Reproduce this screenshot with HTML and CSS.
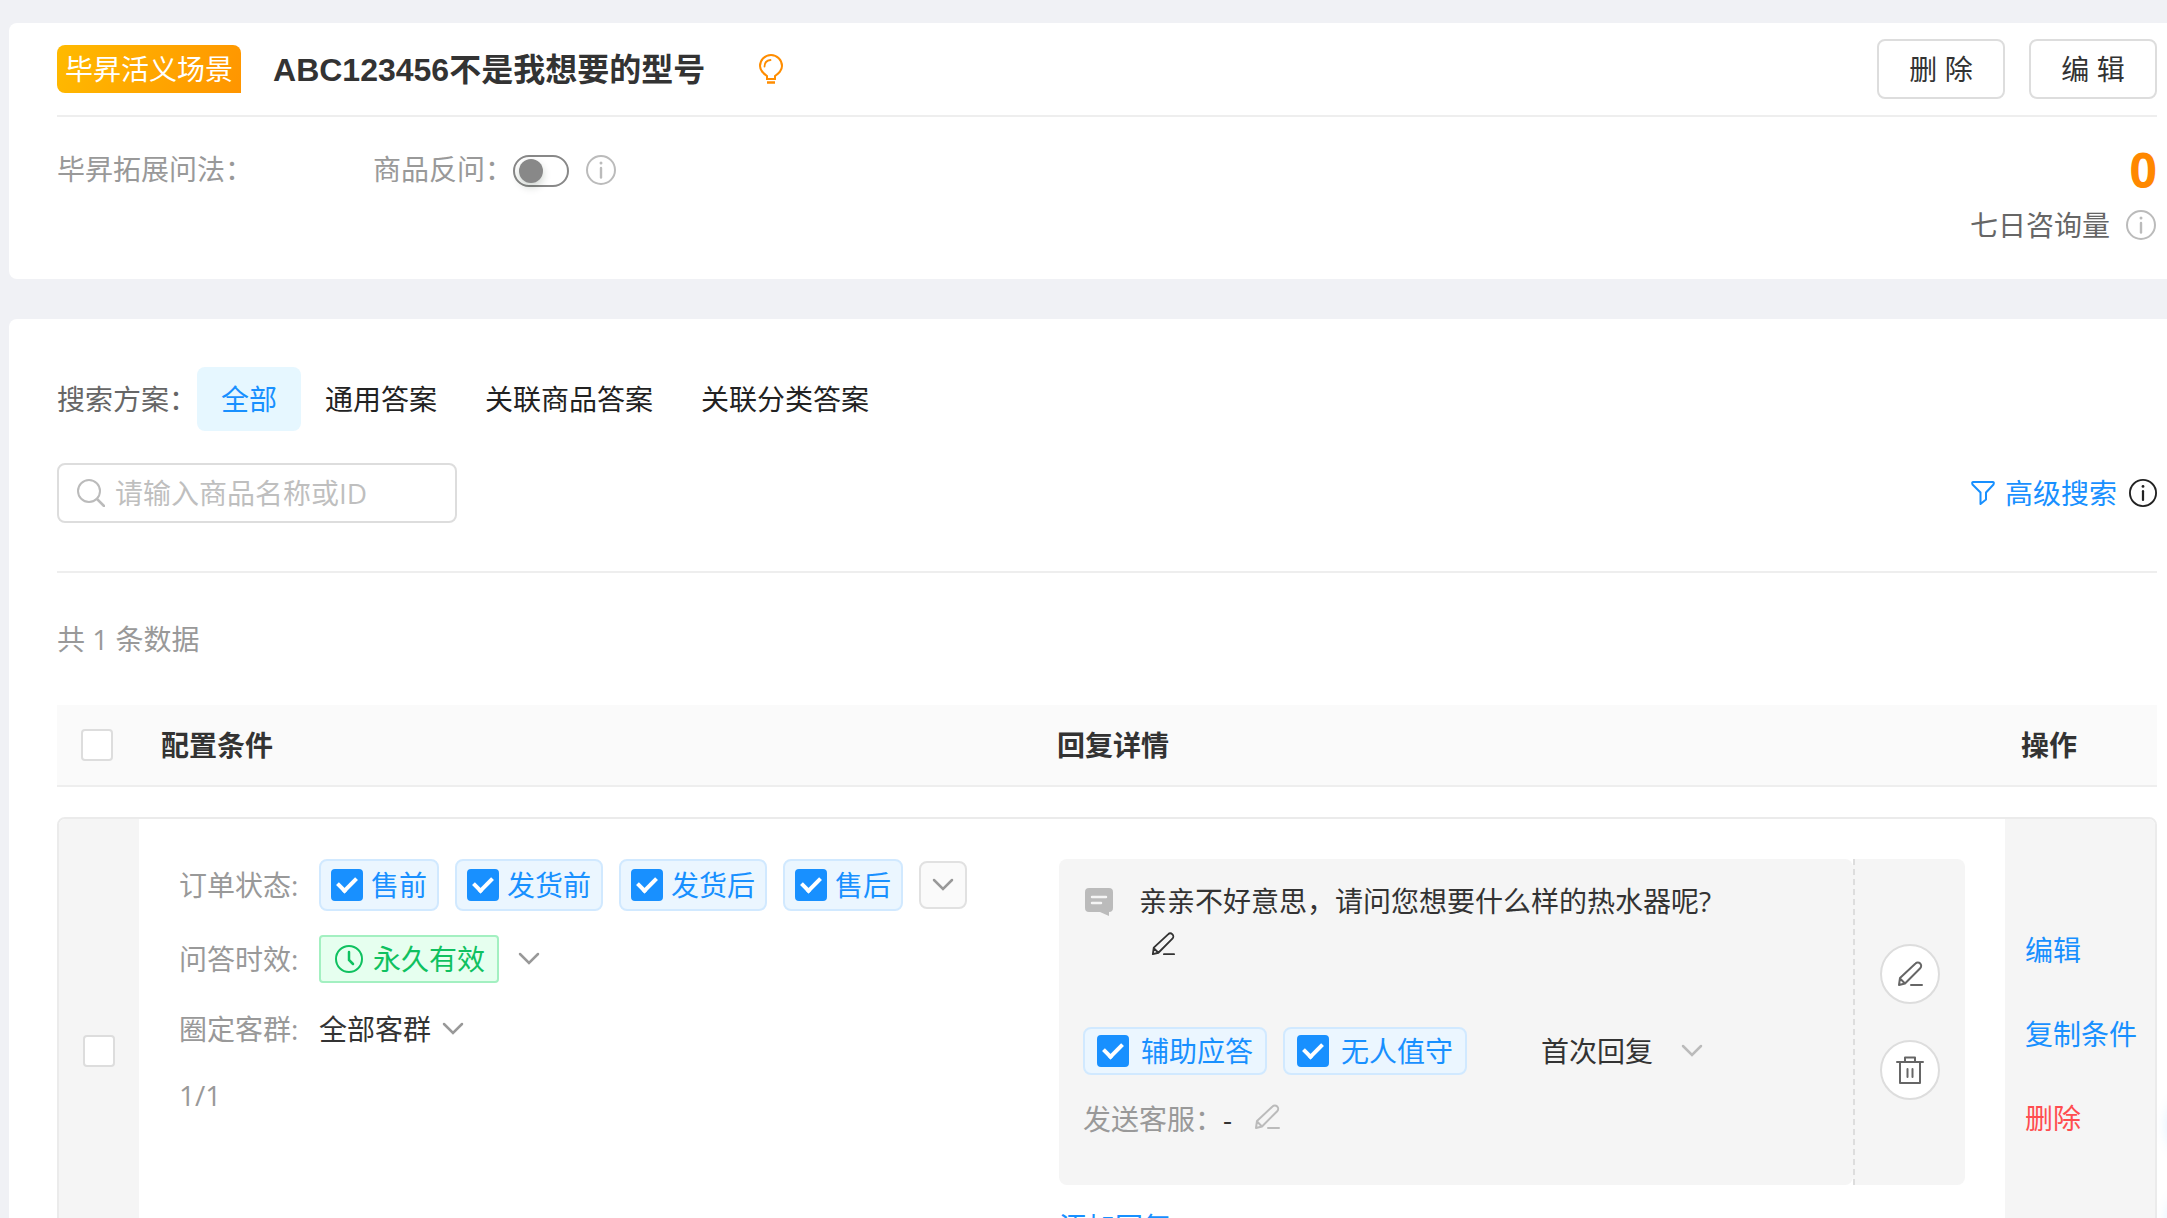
FILE: index.html
```html
<!DOCTYPE html>
<html lang="zh-CN">
<head>
<meta charset="utf-8">
<title>毕昇活义场景</title>
<link rel="stylesheet" href="styles.css">
</head>
<body>
<svg class="sprite" aria-hidden="true">
  <symbol id="i-info" viewBox="0 0 30 30"><circle cx="15" cy="15" r="14" fill="none" stroke="currentColor" stroke-width="2"/><circle cx="15" cy="8" r="1.500" fill="currentColor"/><path d="M15 13v9.500" fill="none" stroke="currentColor" stroke-width="2.400" stroke-linecap="round"/></symbol>
  <symbol id="i-down" viewBox="0 0 22 14"><path d="M2 2l9 9 9-9" fill="none" stroke="currentColor" stroke-width="2.500" stroke-linecap="round"/></symbol>
  <symbol id="i-pen" viewBox="0 0 26 26"><path d="M2 24l1-7L18.500 2.500a3.300 3.300 0 0 1 4.700 4.700L8 22.500zM3 17.500l5 5M14 24h11" fill="none" stroke="currentColor" stroke-width="2" stroke-linejoin="round" stroke-linecap="round"/></symbol>
</svg>
<main class="page">
  <section class="card">
    <header class="head">
      <span class="scene">毕昇活义场景</span>
      <h1 class="title">ABC123456不是我想要的型号</h1>
      <svg class="bulb" viewBox="0 0 24 30" aria-hidden="true"><path d="M8 25v-3C4.500 19.500 1 17 1 12a11 11 0 0 1 22 0C23 17 19.500 19.500 16 22v3z" fill="none" stroke="currentColor" stroke-width="2"/><path d="M5.500 12.500c0-4 2-6 6-6.500" fill="none" stroke="currentColor" stroke-width="1.800" stroke-linecap="round"/><path d="M8 28.500h8" stroke="currentColor" stroke-width="2.500"/></svg>
      <div class="head-actions">
        <button class="btn" type="button">删 除</button>
        <button class="btn" type="button">编 辑</button>
      </div>
    </header>
    <div class="meta">
      <span class="ask">毕昇拓展问法：</span>
      <label class="ask-back" for="ask-back">商品反问：</label>
      <input class="switch" id="ask-back" type="checkbox" role="switch">
      <svg class="info"><use href="#i-info"/></svg>
      <div class="stat">
        <strong class="count">0</strong>
        <span class="stat-label">七日咨询量 <svg class="info"><use href="#i-info"/></svg></span>
      </div>
    </div>
  </section>

  <section class="card list">
    <nav class="tabs">
      <span class="tabs-label">搜索方案：</span>
      <button class="tab active" type="button">全部</button>
      <button class="tab" type="button">通用答案</button>
      <button class="tab" type="button">关联商品答案</button>
      <button class="tab" type="button">关联分类答案</button>
    </nav>
    <div class="search-row">
      <label class="search">
        <svg class="search-icon" viewBox="0 0 28 28" aria-hidden="true"><circle cx="12" cy="12" r="11" fill="none" stroke="currentColor" stroke-width="2"/><path d="M20 20l7 7" stroke="currentColor" stroke-width="2.500" stroke-linecap="round"/></svg>
        <input class="search-input" type="text" placeholder="请输入商品名称或ID" aria-label="请输入商品名称或ID">
      </label>
      <a class="advanced" href="#"><svg class="filter" viewBox="0 0 24 26" aria-hidden="true"><path d="M2 2h20c1 0 1 1 .5 2.500L15 12.500v7L9.500 24V12.500L1.500 4.500C1 3 1 2 2 2z" fill="none" stroke="currentColor" stroke-width="2" stroke-linejoin="round"/></svg>高级搜索</a>
      <svg class="info dark"><use href="#i-info"/></svg>
    </div>
    <p class="total">共 1 条数据</p>

    <div class="grid grid-head">
      <div class="cell-check"><input class="check" type="checkbox" aria-label="全选"></div>
      <div class="th">配置条件</div>
      <div class="th">回复详情</div>
      <div class="th">操作</div>
    </div>
    <div class="grid grid-row">
      <div class="cell-check"><input class="check" type="checkbox" aria-label="选择"></div>
      <div class="conditions">
        <div class="line line-chips">
          <span class="label">订单状态:</span>
          <label class="chip"><input class="check" type="checkbox" checked>售前</label>
          <label class="chip"><input class="check" type="checkbox" checked>发货前</label>
          <label class="chip"><input class="check" type="checkbox" checked>发货后</label>
          <label class="chip"><input class="check" type="checkbox" checked>售后</label>
          <button class="more" type="button" aria-label="更多"><svg class="down"><use href="#i-down"/></svg></button>
        </div>
        <div class="line">
          <span class="label">问答时效:</span>
          <span class="valid"><svg class="clock" viewBox="0 0 28 28" aria-hidden="true"><circle cx="14" cy="14" r="13" fill="none" stroke="currentColor" stroke-width="2"/><path d="M14 7v8l4 4" fill="none" stroke="currentColor" stroke-width="2.500" stroke-linecap="round"/></svg>永久有效</span>
          <svg class="down"><use href="#i-down"/></svg>
        </div>
        <div class="line line-group">
          <span class="label">圈定客群:</span>
          <span>全部客群</span>
          <svg class="down"><use href="#i-down"/></svg>
        </div>
        <div class="pager">1/1</div>
      </div>
      <div class="replies">
        <div class="reply">
          <div class="reply-main">
            <div class="message">
              <svg class="chat" viewBox="0 0 28 28" aria-hidden="true"><path d="M4 0h20a4 4 0 0 1 4 4v16a4 4 0 0 1-4 4v4l-9-4H4a4 4 0 0 1-4-4V4a4 4 0 0 1 4-4z" fill="currentColor"/><path d="M7 9h14M7 15h9" stroke="#f5f5f5" stroke-width="2.500" stroke-linecap="round"/></svg>
              <div class="message-text">亲亲不好意思，请问您想要什么样的热水器呢?<br><svg class="pen"><use href="#i-pen"/></svg></div>
            </div>
            <div class="modes">
              <label class="chip mode"><input class="check" type="checkbox" checked>辅助应答</label>
              <label class="chip mode"><input class="check" type="checkbox" checked>无人值守</label>
              <span class="first">首次回复</span>
              <svg class="down light"><use href="#i-down"/></svg>
            </div>
            <div class="sender"><span class="muted">发送客服：</span>-<svg class="sender-pen"><use href="#i-pen"/></svg></div>
          </div>
          <div class="reply-side">
            <button class="round" type="button" aria-label="编辑"><svg class="round-pen"><use href="#i-pen"/></svg></button>
            <button class="round" type="button" aria-label="删除"><svg class="trash" viewBox="0 0 28 28"><path d="M1 6h26M9 5V1.500h10V5M4 6v21h20V6M11.500 13v8M16.500 13v8" fill="none" stroke="currentColor" stroke-width="2" stroke-linecap="round" stroke-linejoin="round"/></svg></button>
          </div>
        </div>
        <a class="add" href="#">添加回复</a>
      </div>
      <div class="ops">
        <a href="#">编辑</a>
        <a href="#">复制条件</a>
        <a class="danger" href="#">删除</a>
      </div>
    </div>
  </section>
</main>
<div class="dock" aria-hidden="true"><span class="dock-item"></span><span class="dock-item"></span></div>
</body>
</html>
```

FILE: styles.css
```css
* { box-sizing: border-box; }
html { scrollbar-width: none; }
body {
  margin: 0;
  background: #f0f1f5;
  color: #333;
  font: 28px/44px "Open Sans", "Noto Sans CJK SC", sans-serif;
}
button, input { font: inherit; color: inherit; }
button { cursor: pointer; }
svg { display: block; flex: none; }
a { color: #1890ff; text-decoration: none; }
.sprite { position: absolute; width: 0; height: 0; }

.page { display: flex; flex-direction: column; gap: 40px; padding: 23px 0 0 9px; }
.card { background: #fff; border-radius: 8px 0 0 8px; padding: 0 10px 0 48px; }

.head { display: flex; align-items: center; padding: 16px 0; border-bottom: 2px solid #eee; }
.scene {
  padding: 2px 8px;
  border-radius: 8px 8px 0 8px;
  background: linear-gradient(110deg, #ffba00, #ff9500);
  color: #fff;
}
.title {
  margin: 0 0 0 32px;
  padding-top: 2px;
  font: 700 32px/44px "Liberation Sans", "Noto Sans CJK SC", sans-serif;
}
.bulb { width: 24px; height: 30px; margin-left: 54px; color: #ff8d00; }
.head-actions { display: flex; gap: 24px; margin-left: auto; }
.btn {
  width: 128px;
  height: 60px;
  padding: 0;
  border: 2px solid #ddd;
  border-radius: 8px;
  background: #fff;
}
.meta { display: flex; align-items: flex-start; height: 162px; padding-top: 30px; color: #999; }
.ask { width: 316px; }
.switch {
  appearance: none;
  width: 56px;
  height: 32px;
  margin: 8px 17px 0 0;
  padding: 2px 4px;
  border: 2px solid #888;
  border-radius: 16px;
}
.switch::before {
  content: "";
  display: block;
  width: 24px;
  height: 24px;
  border-radius: 50%;
  background: #888;
  box-shadow: 0 4px 8px rgba(0, 35, 11, .2);
}
.info { width: 30px; height: 30px; color: #bbb; }
.meta > .info { margin-top: 8px; }
.stat { display: flex; flex-direction: column; align-items: flex-end; margin-left: auto; }
.count { font: 700 48px/46px "Open Sans", sans-serif; color: #ff8800; }
.stat-label { display: flex; align-items: center; gap: 16px; padding: 10px 1px 0 0; color: #666; }

.list { padding-top: 48px; min-height: 960px; }
.tabs { display: flex; align-items: center; }
.tabs-label { color: #666; }
.tab { height: 64px; padding: 0 24px; border: 0; border-radius: 8px; background: none; color: #222; }
.tab.active { background: #e6f7ff; color: #1890ff; }
.search-row { display: flex; align-items: center; padding: 32px 0 48px; border-bottom: 2px solid #eee; }
.search {
  display: flex;
  align-items: center;
  gap: 10px;
  width: 400px;
  height: 60px;
  padding: 0 18px;
  border: 2px solid #ddd;
  border-radius: 8px;
}
.search-icon { width: 28px; height: 28px; color: #bbb; }
.search-input { flex: 1; min-width: 0; padding: 0; border: 0; outline: 0; background: none; }
.search-input::placeholder { color: #bfbfbf; }
.advanced { display: flex; align-items: center; gap: 10px; margin: 0 12px 0 auto; }
.filter { width: 24px; height: 26px; }
.info.dark { width: 28px; height: 28px; color: #222; }
.total { margin: 44px 0; color: #999; }

.grid { display: grid; grid-template-columns: 82px 918px minmax(0, 1fr) 152px; }
.grid-head { align-items: center; height: 82px; background: #fafafa; border-bottom: 2px solid #eee; font-weight: 700; }
.grid-head .th:nth-child(2) { padding-left: 22px; }
.grid-head .th:nth-child(4) { padding-left: 16px; }
.check {
  appearance: none;
  display: block;
  flex: none;
  width: 32px;
  height: 32px;
  margin: 0;
  border: 2px solid #ddd;
  border-radius: 4px;
  background: #fff;
}
.check:checked { border-color: #1890ff; background: #1890ff; }
.check:checked::before {
  content: "";
  display: block;
  width: 8px;
  height: 15px;
  margin: 3px 0 0 10px;
  border: solid #fff;
  border-width: 0 4px 4px 0;
  box-sizing: content-box;
  transform: translate(-2px, -1px) rotate(45deg);
}
.grid-head .cell-check { padding-left: 24px; }
.grid-row { margin-top: 30px; border: 2px solid #ebebeb; border-radius: 8px; grid-template-columns: 80px 920px minmax(0, 1fr) 150px; overflow: hidden; }
.grid-row .cell-check { display: flex; align-items: center; padding-left: 24px; background: #f5f5f5; }
.conditions { display: flex; flex-direction: column; padding: 40px 0 0 40px; }
.line { display: flex; align-items: center; height: 48px; }
.line-chips { height: 52px; gap: 16px; margin-bottom: 24px; }
.label { width: 140px; color: #999; }
.line-chips .label { width: 124px; }
.chip {
  display: flex;
  align-items: center;
  gap: 8px;
  height: 52px;
  padding: 0 10px;
  border: 2px solid #d1e9ff;
  border-radius: 8px;
  background: #ebf6ff;
  color: #1890ff;
}
.more {
  display: grid;
  place-items: center;
  width: 48px;
  height: 48px;
  padding: 0;
  border: 2px solid #e1e1e1;
  border-radius: 8px;
  background: #fafafa;
}
.down { width: 22px; height: 14px; color: #999; }
.valid {
  display: flex;
  align-items: center;
  gap: 10px;
  height: 48px;
  margin-right: 19px;
  padding: 0 12px 0 14px;
  border: 2px solid #a3f0c1;
  border-radius: 4px;
  background: #e6ffef;
  color: #0fc160;
}
.clock { width: 28px; height: 28px; }
.line-group { height: 44px; margin: 24px 0 22px; gap: 11px; }
.line-group .label { width: 129px; }
.pager { color: #999; }

.replies { padding: 40px 40px 34px 0; }
.reply { display: flex; min-height: 326px; }
.reply-main { flex: 1; padding: 20px 24px; border-radius: 8px; background: #f5f5f5; }
.reply-side {
  display: flex;
  flex-direction: column;
  align-items: center;
  justify-content: center;
  gap: 36px;
  width: 112px;
  border-left: 2px dashed #ddd;
  border-radius: 0 8px 8px 0;
  background: #f5f5f5;
}
.message { display: flex; align-items: flex-start; gap: 26px; padding-left: 2px; }
.chat { width: 28px; height: 28px; margin-top: 9px; color: #bbb; }
.pen { display: inline-block; width: 24px; height: 24px; margin-left: 12px; }
.light { color: #bbb; }
.modes { display: flex; align-items: center; margin-top: 60px; }
.mode { gap: 12px; height: 48px; padding: 0 12px; margin-right: 16px; }
.first { margin: 0 28px 0 58px; }
.sender { display: flex; align-items: flex-start; margin-top: 22px; }
.sender-pen { width: 26px; height: 26px; margin: 7px 0 0 22px; color: #bbb; }
.muted { color: #999; }
.round {
  display: grid;
  place-items: center;
  width: 60px;
  height: 60px;
  padding: 0;
  border: 2px solid #ddd;
  border-radius: 50%;
  background: #fff;
  color: #666;
}
.round-pen { width: 26px; height: 26px; }
.trash { width: 28px; height: 28px; }
.add { display: block; margin-top: 20px; }
.ops {
  display: flex;
  flex-direction: column;
  justify-content: center;
  gap: 40px;
  padding: 0 0 34px 20px;
  background: #f5f5f5;
}
.danger { color: #ff4d4f; }

/* Assistant dock, collapsed past the right edge of the window */
.dock {
  position: fixed;
  right: -68px;
  bottom: -36px;
  display: flex;
  flex-direction: column;
  gap: 32px;
}
.dock-item {
  width: 64px;
  height: 64px;
  border-radius: 50%;
  background: #fff;
  box-shadow: 0 0 16px rgba(24, 144, 255, .25);
}
```
